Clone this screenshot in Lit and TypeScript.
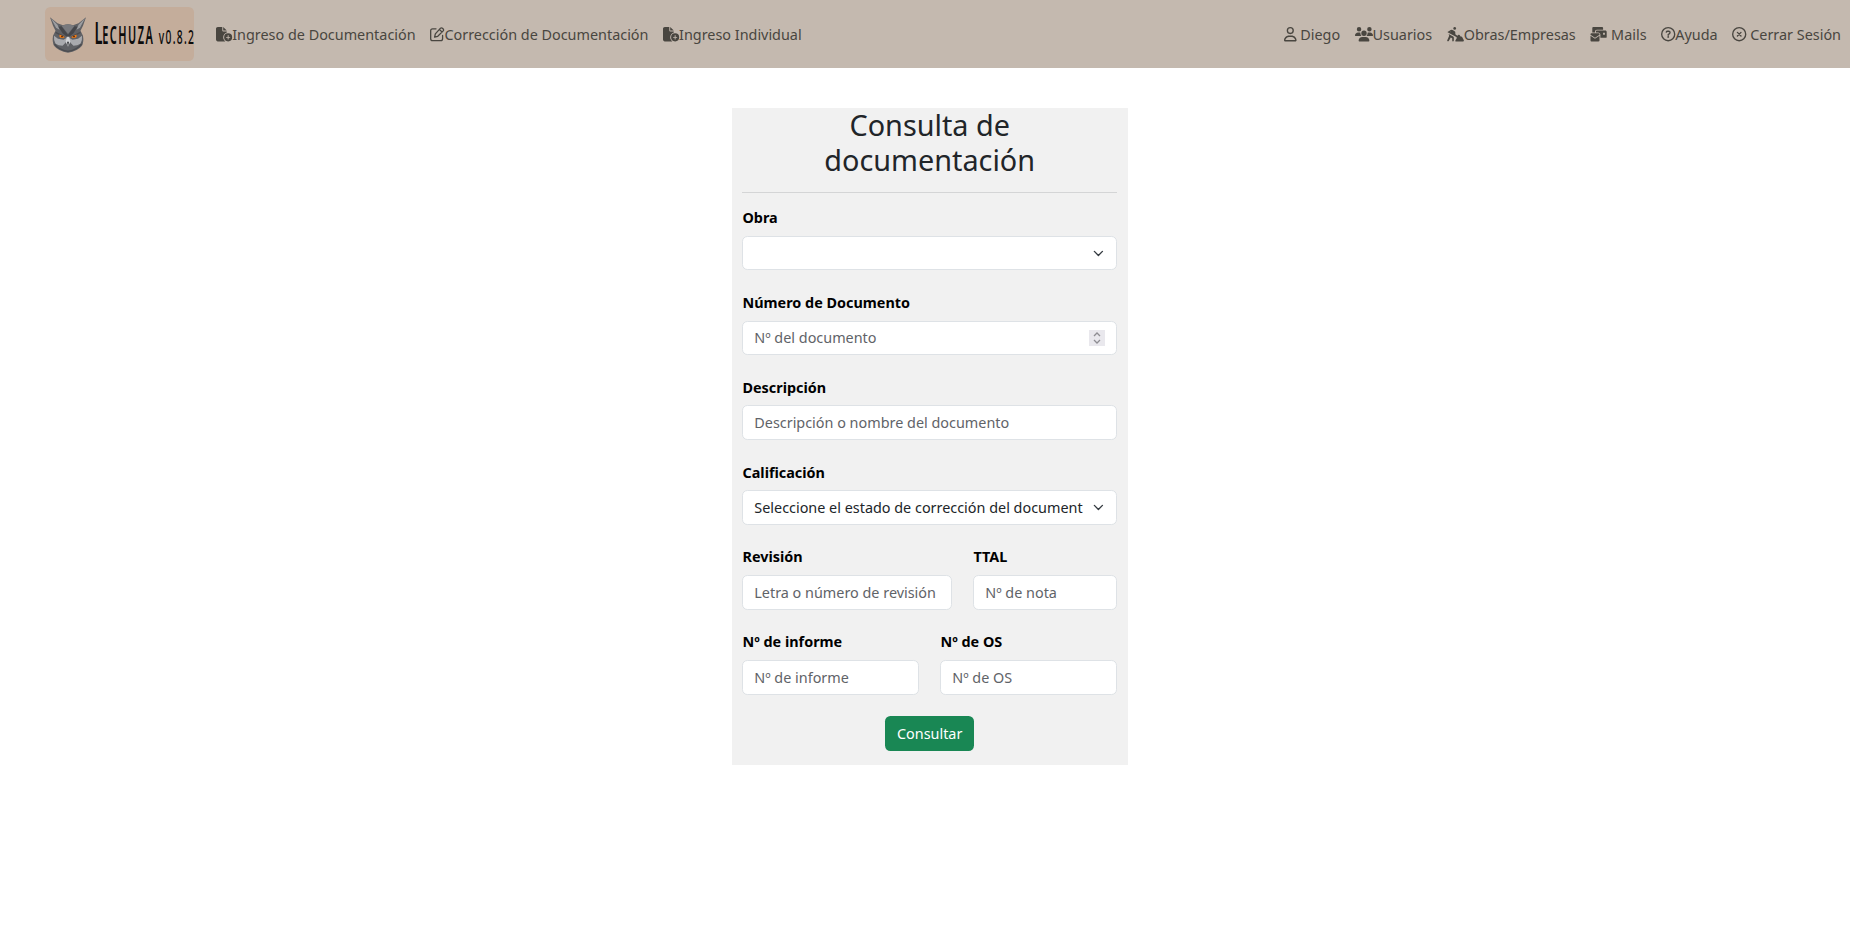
import { LitElement, html, css } from "lit";
import { customElement } from "lit/decorators.js";

const fileAdd = html`<svg class="ic" viewBox="0 0 576 512" style="width:16.2px"><path d="M0 64C0 28.700 28.700 0 64 0h160v128c0 17.700 14.300 32 32 32h128v38.600C310.100 219.500 256 287.400 256 368c0 59.100 29.100 111.300 73.700 143.300-3.200.5-6.400.7-9.700.7H64c-35.300 0-64-28.700-64-64V64zm384 64H256V0l128 128zM288 368a144 144 0 1 1 288 0 144 144 0 1 1-288 0zm160-64c0-8.800-7.200-16-16-16s-16 7.200-16 16v48h-48c-8.800 0-16 7.200-16 16s7.200 16 16 16h48v48c0 8.800 7.200 16 16 16s16-7.200 16-16v-48h48c8.800 0 16-7.200 16-16s-7.200-16-16-16h-48v-48z"/></svg>`;
const edit = html`<svg class="ic" viewBox="0 0 512 512" style="width:14.4px"><g fill="none" stroke="currentColor" stroke-width="46" stroke-linejoin="round" stroke-linecap="round"><path d="M214 64H92a68 68 0 0 0-68 68v288a68 68 0 0 0 68 68h288a68 68 0 0 0 68-68V298"/><path d="M374 42a48 48 0 0 1 68 0l28 28a48 48 0 0 1 0 68L276 332l-112 26 26-112zM332 84l96 96"/></g></svg>`;
const user = html`<svg class="ic" viewBox="0 0 448 512" style="width:12.6px"><path d="M304 128a80 80 0 1 0-160 0 80 80 0 1 0 160 0zm-208 0a128 128 0 1 1 256 0 128 128 0 1 1-256 0zM49.300 464h349.400c-8.900-63.300-63.300-112-129-112h-91.400c-65.700 0-120.100 48.700-129 112zM0 482.300C0 383.800 79.800 304 178.300 304h91.400c98.500 0 178.300 79.800 178.300 178.300 0 16.400-13.300 29.700-29.700 29.700H29.700C13.300 512 0 498.700 0 482.300z"/></svg>`;
const users = html`<svg class="ic" viewBox="0 0 640 512" style="width:18px"><path d="M144 0a80 80 0 1 1 0 160 80 80 0 1 1 0-160zm368 0a80 80 0 1 1 0 160 80 80 0 1 1 0-160zM0 298.700C0 239.800 47.800 192 106.700 192h42.700c15.900 0 31 3.500 44.600 9.700-1.300 7.200-1.900 14.700-1.900 22.300 0 38.200 16.800 72.500 43.300 96H21.300C9.600 320 0 310.400 0 298.700zM405.300 320h-.7c26.600-23.500 43.300-57.800 43.300-96 0-7.600-.7-15-1.900-22.300 13.600-6.300 28.700-9.700 44.600-9.700h42.700c58.900 0 106.700 47.800 106.700 106.700 0 11.800-9.600 21.300-21.300 21.300H405.300zM224 224a96 96 0 1 1 192 0 96 96 0 1 1-192 0zM128 485.300C128 411.700 187.700 352 261.300 352h117.400c73.600 0 133.300 59.700 133.300 133.300 0 14.700-11.900 26.700-26.700 26.700H154.700c-14.700 0-26.700-11.900-26.700-26.700z"/></svg>`;
const digger = html`<svg class="ic" viewBox="-16 0 592 512" style="width:17.2px"><circle cx="248" cy="52" r="48"/><path d="M50 140 106 108Q150 88 190 112L246 150Q270 166 270 196V262L340 308 384 280Q412 264 430 290L456 336H484Q502 336 512 352L574 474Q584 512 550 512H290Q256 508 272 478L324 392 310 354 -6 190 10 160 50 170 84 190 112 158 90 170 62 200 20 176Q24 154 50 140z"/><path d="M32 252 194 340Q218 354 218 380V482Q216 510 190 512T160 482V398L108 370 42 490Q26 518-2 508T-16 470L52 312z"/></svg>`;
const mails = html`<svg class="ic" viewBox="0 0 576 512" style="width:17.2px"><path d="M64 32c0-18 14-32 32-32h320c18 0 32 14 32 32v64H224c-35 0-64 29-64 64v32H64z"/><path fill-rule="evenodd" d="M192 160c0-18 14-32 32-32h304c26 0 48 22 48 48v176c0 18-14 32-32 32H352V272c0-45-36-80-80-80h-80zm256 48v64h64v-64z"/><path d="M0 256c0-18 14-32 32-32h256c18 0 32 14 32 32v16L160 380 0 272z"/><path d="M0 312 148 410q12 8 24 0L320 312v168c0 18-14 32-32 32H32c-18 0-32-14-32-32z"/></svg>`;
const help = html`<svg class="ic" viewBox="0 0 512 512" style="width:14.4px"><g fill="none" stroke="currentColor" stroke-width="48"><circle cx="256" cy="256" r="232"/><path stroke-linecap="round" d="M188 184q8-34 48-34h36q50 4 50 50 0 30-30 46l-36 22v26"/></g><circle cx="256" cy="352" r="32"/></svg>`;
const close = html`<svg class="ic" viewBox="0 0 512 512" style="width:14.4px"><g fill="none" stroke="currentColor" stroke-width="48" stroke-linecap="round"><circle cx="256" cy="256" r="232"/><path d="M192 192 320 320M320 192 192 320"/></g></svg>`;

@customElement("app-root")
export class AppRoot extends LitElement {
  static styles = css`
    :host { display: block; font: 14.4px/21.6px "Noto Sans", sans-serif; color: #212529; min-height: 931px; background: #fff; }
    * { box-sizing: border-box; }
    nav { height: 67.5px; background: #c4b9af; display: flex; align-items: center; padding: 0 9px 0 45px; color: #494640; }
    .brand { width: 149px; height: 54px; margin-right: 22px; border-radius: 5.4px; background: #c4ad9b; display: block; }
    .links { display: flex; gap: 14.4px; white-space: nowrap; padding-top: 1.6px; }
    .right { margin-left: auto; }
    .ic { height: 14.4px; vertical-align: -1.8px; fill: currentColor; overflow: visible; }
    main { width: 396px; margin: 40.5px 0 0 731.7px; background: #f1f1f1; padding: 0 10.8px 14.4px; }
    h1 { margin: 0; font-size: 28.8px; line-height: 34.56px; font-weight: 400; text-align: center; }
    hr { margin: 14.4px 0; border: 0; border-top: 1px solid #d4d5d6; }
    .row { display: flex; gap: 21.6px; margin-bottom: 21.6px; }
    .field { flex: 1; min-width: 0; }
    .wide { flex: 0 0 209.4px; }
    label { display: block; font-weight: 700; color: #000; margin-bottom: 7.2px; }
    .ctl { height: 34.5px; border: 1px solid #dee2e6; border-radius: 5.4px; background: #fff; padding: 0 10.8px; display: flex; align-items: center; justify-content: space-between; color: #5f6368; white-space: nowrap; }
    .sel { color: #212529; }
    .txt { overflow: hidden; width: 329px; }
    .chev { width: 10.8px; height: 10.8px; flex: none; margin-right: 1.5px; }
    .spin { width: 16px; height: 16px; background: #e9e8ed; flex: none; }
    .actions { display: flex; justify-content: center; }
    button { height: 34.6px; width: 89px; border: 0; border-radius: 5.4px; background: #198754; color: #fff; font: inherit; padding: 0; }
  `;

  chevron() {
    return html`<svg class="chev" viewBox="0 0 16 16"><path fill="none" stroke="#343a40" stroke-linecap="round" stroke-linejoin="round" stroke-width="2" d="m2 5 6 6 6-6"/></svg>`;
  }

  field(label: string, content: unknown, cls = "", ctl = "") {
    return html`<div class="field ${cls}"><label>${label}</label><div class="ctl ${ctl}">${content}</div></div>`;
  }

  brand() {
    return html`<svg class="brand" viewBox="0 0 149 54">
      <g transform="translate(4.5 9.8)">
        <path fill="#606165" d="M.5.5 8 6.500 13.500 8.500Q18.500 6.500 23.500 8.500L29 6.500 36.500.5 33.500 9 31 14 33.500 19Q34.500 25 32.500 29 28 34.500 18.500 36 9 34.500 4.500 29 2.500 25 3.500 19L6 14 3.500 9z"/>
        <path fill="#9c9da0" d="M1.500 1.500 8 8 10 13 6.500 11zM35.500 1.500 29 8 27 13 30.500 11z"/>
        <path fill="#78797d" d="M12 9 18.500 17 25 9 18.500 7.500z"/>
        <path fill="#45464a" d="M9 10 12 9.500 18.500 18 25 9.500 28 10 24 16.500 18.500 21 13 16.500z"/>
        <path fill="#a9aaae" d="M4.500 19Q4 24 6 27 9 29 13 29L16 26 17.500 21 14 23 8.500 22zM32.500 19Q33 24 31 27 28 29 24 29L21 26 19.500 21 23 23 28.500 22z"/>
        <path fill="none" stroke="#4b4c50" stroke-width="1.300" d="M5 27Q9 33 18.500 34.500 28 33 32 27M6 15.500 15 20M31 15.500 22 20"/>
        <path fill="#f47c12" d="M10 17.800 15.500 20.300Q12.500 22.300 10 20.300zM27 17.800 21.500 20.300Q24.500 22.300 27 20.300z"/>
        <circle cx="12.500" cy="19.800" r=".8" fill="#321b12"/><circle cx="24.500" cy="19.800" r=".8" fill="#321b12"/>
        <path fill="#d3d4d7" d="M17.300 20h2.400l1.200 5-2.400 5-2.400-5z"/>
        <path fill="#37383b" d="M17.500 25h2l-1 5z"/>
      </g>
      <g font-family="Noto Sans" fill="#0b0b0b">
        <text transform="translate(49.600 37.200) scale(.47 1)" font-size="31" font-weight="600">L</text>
        <text transform="translate(57.300 37.200) scale(.42 1)" font-size="26" font-weight="600" letter-spacing="3.500">ECHUZA</text>
        <text transform="translate(113.800 37.200) scale(.5 1)" font-size="20.500" font-weight="500" letter-spacing="2.600">v0.8.2</text>
      </g>
    </svg>`;
  }

  render() {
    return html`
      <nav>
        ${this.brand()}
        <div class="links"><span>${fileAdd}Ingreso de Documentación</span><span>${edit}Corrección de Documentación</span><span>${fileAdd}Ingreso Individual</span></div>
        <div class="links right"><span>${user} Diego</span><span>${users}Usuarios</span><span>${digger}Obras/Empresas</span><span>${mails} Mails</span><span>${help}Ayuda</span><span>${close} Cerrar Sesión</span></div>
      </nav>
      <main>
        <h1>Consulta de<br>documentación</h1>
        <hr>
        <div class="row">${this.field("Obra", html`<span></span>${this.chevron()}`, "", "sel")}</div>
        <div class="row">${this.field("Número de Documento", html`<span>Nº del documento</span><svg class="spin" viewBox="0 0 16 16"><path fill="none" stroke="#8e8d92" stroke-width="1.300" d="m5 6 3-3 3 3M5 10l3 3 3-3"/></svg>`)}</div>
        <div class="row">${this.field("Descripción", "Descripción o nombre del documento")}</div>
        <div class="row">${this.field("Calificación", html`<span class="txt">Seleccione el estado de corrección del document</span>${this.chevron()}`, "", "sel")}</div>
        <div class="row">${this.field("Revisión", "Letra o número de revisión", "wide")}${this.field("TTAL", "Nº de nota")}</div>
        <div class="row">${this.field("Nº de informe", "Nº de informe")}${this.field("Nº de OS", "Nº de OS")}</div>
        <div class="actions"><button>Consultar</button></div>
      </main>`;
  }
}
